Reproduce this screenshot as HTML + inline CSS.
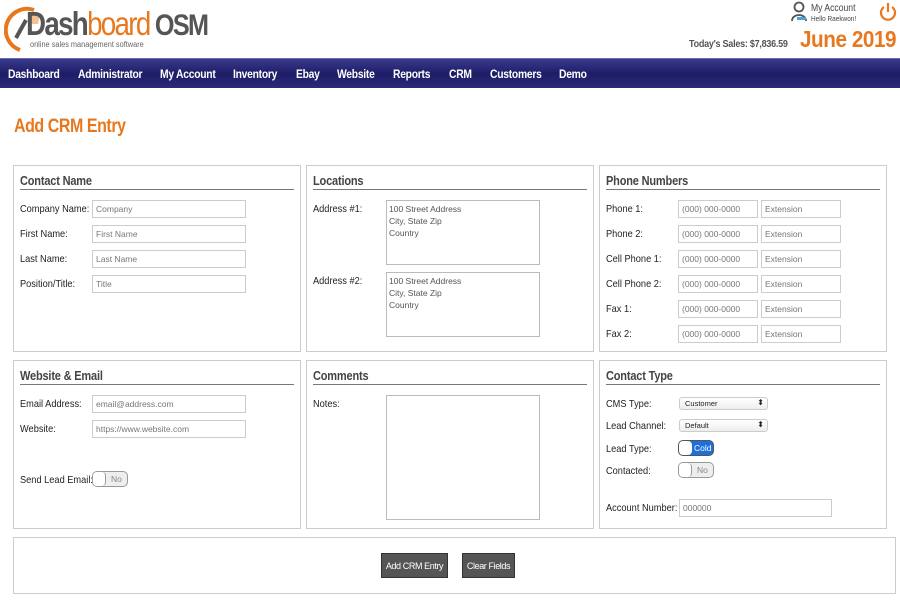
<!DOCTYPE html>
<html><head><meta charset="utf-8"><style>
*{box-sizing:border-box;margin:0;padding:0}
body{width:900px;height:600px;position:relative;background:#fff;font-family:"Liberation Sans",Arial,sans-serif;color:#222;overflow:hidden;white-space:nowrap}
.a{position:absolute}
.n{transform:scaleX(.86);transform-origin:0 0}
.nav{left:0;top:58px;width:900px;height:30px;background:linear-gradient(#3a3a8e,#1d1d66 50%,#2a2a78);border-top:1px solid #6a6ab0}
.nav span{position:absolute;top:8px;color:#fff;font-weight:bold;font-size:12px;letter-spacing:-0.3px;transform:scaleX(.86);transform-origin:0 0}
.panel{border:1px solid #ccc;background:#fff}
.h{font-size:12.5px;color:#444;font-weight:bold;letter-spacing:-0.2px;transform:scaleX(.88);transform-origin:0 0}
.line{height:1px;background:#777}
.l{font-size:10.5px;color:#222;transform:scaleX(.88);transform-origin:0 0}
.in{border:1px solid #ccc;height:18px;font-size:8.5px;color:#777;padding:3px 3px 0;background:#fff}
.ta{border:1px solid #bbb;font-size:8.5px;color:#555;padding:2px 2px;line-height:12px}
.sel{border:1px solid #ccc;border-radius:3px;height:13px;font-size:7.5px;padding:1px 5px;background:linear-gradient(#fff,#eee)}
.sel:after{content:"⬍";position:absolute;right:3px;top:0;font-size:8px}
.btn{background:#555;color:#fff;font-size:9px;height:25px;line-height:25px;text-align:center;border:1px solid #333;letter-spacing:-0.4px}
</style></head><body>
<svg class="a" style="left:4px;top:6px" width="40" height="46" viewBox="0 0 40 46"><path d="M30 4 A19 19 0 1 0 16 44" fill="none" stroke="#e8781e" stroke-width="4"/><path d="M22 14 L12 32" stroke="#555" stroke-width="4"/><path d="M24 6 L36 8 L34 18 L28 18Z" fill="#f4c090"/></svg>
<div class="a" style="left:26px;top:5px;font-size:33px;font-weight:bold;letter-spacing:-2px;color:#555;line-height:38px;transform:scaleX(.84);transform-origin:0 0">Dash<span style="color:#e8781e;font-weight:normal">board</span><span style="font-size:30px"> OSM</span></div>
<div class="a" style="left:30px;top:40px;font-size:8px;color:#666;transform:scaleX(.92);transform-origin:0 0">online sales management software</div>
<svg class="a" style="left:790px;top:1px" width="18" height="20" viewBox="0 0 18 20"><circle cx="9" cy="6" r="4.5" fill="none" stroke="#555" stroke-width="1.8"/><path d="M2 20 C2 12 16 12 16 20" fill="none" stroke="#555" stroke-width="1.8"/><rect x="7" y="16" width="9" height="3" fill="#4aa3d8"/></svg>
<div class="a n" style="left:811px;top:3px;font-size:10px;color:#444">My Account</div>
<div class="a n" style="left:811px;top:14px;font-size:7.5px;color:#444">Hello Raekwon!</div>
<svg class="a" style="left:879px;top:2px" width="18" height="20" viewBox="0 0 18 20"><path d="M5 5 A7 7 0 1 0 13 5" fill="none" stroke="#e8781e" stroke-width="2.2"/><path d="M9 1 V10" stroke="#e8781e" stroke-width="2.2"/></svg>
<div class="a n" style="left:689px;top:38px;font-size:10.5px;font-weight:bold;color:#555;letter-spacing:-0.3px">Today's Sales: $7,836.59</div>
<div class="a" style="left:800px;top:26px;font-size:23px;font-weight:bold;color:#e8781e;letter-spacing:-0.5px;transform:scaleX(.9);transform-origin:0 0">June 2019</div>
<div class="a nav"><span style="left:8px">Dashboard</span><span style="left:78px">Administrator</span><span style="left:160px">My Account</span><span style="left:233px">Inventory</span><span style="left:296px">Ebay</span><span style="left:337px">Website</span><span style="left:393px">Reports</span><span style="left:449px">CRM</span><span style="left:490px">Customers</span><span style="left:559px">Demo</span></div>
<div class="a" style="left:14px;top:116px;font-size:19px;font-weight:bold;color:#e8781e;letter-spacing:-0.5px;transform:scaleX(.84);transform-origin:0 0">Add CRM Entry</div>

<div class="a panel" style="left:13px;top:165px;width:288px;height:187px"></div>
<div class="a panel" style="left:306px;top:165px;width:288px;height:187px"></div>
<div class="a panel" style="left:599px;top:165px;width:288px;height:187px"></div>
<div class="a panel" style="left:13px;top:360px;width:288px;height:169px"></div>
<div class="a panel" style="left:306px;top:360px;width:288px;height:169px"></div>
<div class="a panel" style="left:599px;top:360px;width:288px;height:169px"></div>
<div class="a panel" style="left:13px;top:537px;width:883px;height:57px"></div>

<div class="a h" style="left:20px;top:174px">Contact Name</div><div class="a line" style="left:20px;top:189px;width:274px"></div>
<div class="a h" style="left:313px;top:174px">Locations</div><div class="a line" style="left:313px;top:189px;width:274px"></div>
<div class="a h" style="left:606px;top:174px">Phone Numbers</div><div class="a line" style="left:606px;top:189px;width:274px"></div>
<div class="a h" style="left:20px;top:369px">Website &amp; Email</div><div class="a line" style="left:20px;top:384px;width:274px"></div>
<div class="a h" style="left:313px;top:369px">Comments</div><div class="a line" style="left:313px;top:384px;width:274px"></div>
<div class="a h" style="left:606px;top:369px">Contact Type</div><div class="a line" style="left:606px;top:384px;width:274px"></div>

<div class="a l" style="left:20px;top:203px">Company Name:</div><div class="a in" style="left:92px;top:200px;width:154px">Company</div>
<div class="a l" style="left:20px;top:228px">First Name:</div><div class="a in" style="left:92px;top:225px;width:154px">First Name</div>
<div class="a l" style="left:20px;top:253px">Last Name:</div><div class="a in" style="left:92px;top:250px;width:154px">Last Name</div>
<div class="a l" style="left:20px;top:278px">Position/Title:</div><div class="a in" style="left:92px;top:275px;width:154px">Title</div>

<div class="a l" style="left:313px;top:203px">Address #1:</div><div class="a ta" style="left:386px;top:200px;width:154px;height:65px">100 Street Address<br>City, State Zip<br>Country</div>
<div class="a l" style="left:313px;top:275px">Address #2:</div><div class="a ta" style="left:386px;top:272px;width:154px;height:65px">100 Street Address<br>City, State Zip<br>Country</div>

<div class="a l" style="left:606px;top:203px">Phone 1:</div><div class="a in" style="left:678px;top:200px;width:80px">(000) 000-0000</div><div class="a in" style="left:761px;top:200px;width:80px">Extension</div>
<div class="a l" style="left:606px;top:228px">Phone 2:</div><div class="a in" style="left:678px;top:225px;width:80px">(000) 000-0000</div><div class="a in" style="left:761px;top:225px;width:80px">Extension</div>
<div class="a l" style="left:606px;top:253px">Cell Phone 1:</div><div class="a in" style="left:678px;top:250px;width:80px">(000) 000-0000</div><div class="a in" style="left:761px;top:250px;width:80px">Extension</div>
<div class="a l" style="left:606px;top:278px">Cell Phone 2:</div><div class="a in" style="left:678px;top:275px;width:80px">(000) 000-0000</div><div class="a in" style="left:761px;top:275px;width:80px">Extension</div>
<div class="a l" style="left:606px;top:303px">Fax 1:</div><div class="a in" style="left:678px;top:300px;width:80px">(000) 000-0000</div><div class="a in" style="left:761px;top:300px;width:80px">Extension</div>
<div class="a l" style="left:606px;top:328px">Fax 2:</div><div class="a in" style="left:678px;top:325px;width:80px">(000) 000-0000</div><div class="a in" style="left:761px;top:325px;width:80px">Extension</div>

<div class="a l" style="left:20px;top:398px">Email Address:</div><div class="a in" style="left:92px;top:395px;width:154px">email@address.com</div>
<div class="a l" style="left:20px;top:423px">Website:</div><div class="a in" style="left:92px;top:420px;width:154px">https://www.website.com</div>
<div class="a l" style="left:20px;top:474px">Send Lead Email:</div>
<div class="a" style="left:92px;top:471px;width:36px;height:16px;border:1px solid #999;border-radius:5px;background:#eee;font-size:8.5px;color:#888;padding:2px 0 0 18px">No<div class="a" style="left:0;top:0;width:13px;height:14px;border-radius:4px;background:#fff;border-right:1px solid #999"></div></div>

<div class="a l" style="left:313px;top:398px">Notes:</div><div class="a ta" style="left:386px;top:395px;width:154px;height:125px"></div>

<div class="a l" style="left:606px;top:398px">CMS Type:</div><div class="a sel" style="left:679px;top:397px;width:89px">Customer</div>
<div class="a l" style="left:606px;top:420px">Lead Channel:</div><div class="a sel" style="left:679px;top:419px;width:89px">Default</div>
<div class="a l" style="left:606px;top:443px">Lead Type:</div>
<div class="a" style="left:678px;top:440px;width:36px;height:16px;border:1px solid #555;border-radius:5px;background:#1e6fd9;font-size:8.5px;color:#fff;padding:2px 0 0 15px">Cold<div class="a" style="left:0;top:0;width:13px;height:14px;border-radius:4px;background:#fff"></div></div>
<div class="a l" style="left:606px;top:465px">Contacted:</div>
<div class="a" style="left:678px;top:462px;width:36px;height:16px;border:1px solid #999;border-radius:5px;background:#eee;font-size:8.5px;color:#888;padding:2px 0 0 18px">No<div class="a" style="left:0;top:0;width:13px;height:14px;border-radius:4px;background:#fff;border-right:1px solid #999"></div></div>
<div class="a l" style="left:606px;top:502px">Account Number:</div><div class="a in" style="left:679px;top:499px;width:153px">000000</div>

<div class="a btn" style="left:381px;top:553px;width:67px">Add CRM Entry</div>
<div class="a btn" style="left:462px;top:553px;width:53px">Clear Fields</div>
</body></html>
